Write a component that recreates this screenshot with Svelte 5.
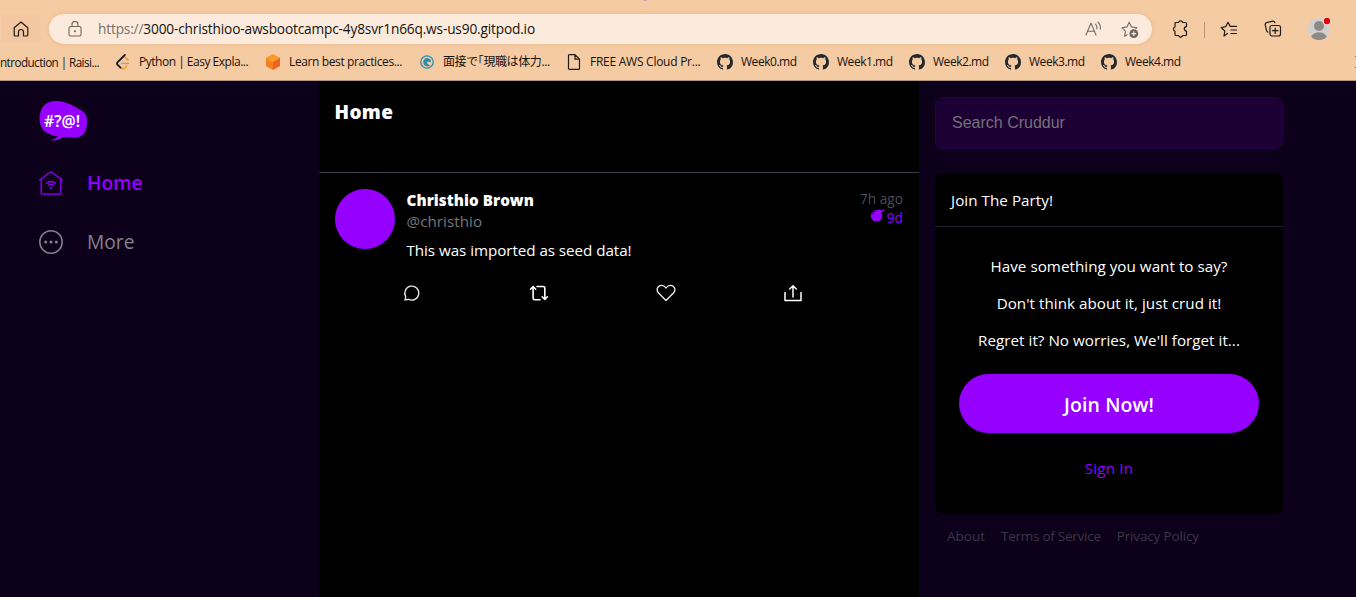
<script>
  const bookmarks = [
    { icon: 'leet', text: 'Python | Easy Expla...', ls: -0.49 },
    { icon: 'cube', text: 'Learn best practices...', ls: -0.38 },
    { icon: 'ring', text: '面接で｢現職は体力...', ls: -0.4 },
    { icon: 'file', text: 'FREE AWS Cloud Pr...', ls: -0.26 },
    ...[0, 1, 2, 3, 4].map((n) => ({ icon: 'github', text: `Week${n}.md`, ls: -0.46 }))
  ];
</script>

<div class="page">
  <header class="chrome">
    <span class="speck"></span>
    <div class="toolbar">
      <div class="homebtn">
        <svg width="16" height="16" viewBox="0 0 16 16" fill="none" stroke="#1f1a16" stroke-width="1.2" stroke-linejoin="round"><path d="M1.2 6.8 8 1l6.800 5.800V14a1 1 0 0 1-1 1h-3.300v-4a2.500 2.500 0 0 0-5 0v4H2.200a1 1 0 0 1-1-1z" /></svg>
      </div>
      <div class="address">
        <svg class="lock" width="14" height="16" viewBox="0 0 14 16" fill="none" stroke="#6e665f" stroke-width="1.1"><rect x="1" y="5.500" width="12" height="9.500" rx="1.500" /><path d="M4 5.500V3.500a3 3 0 0 1 6 0v2" /><circle cx="7" cy="10.200" r=".7" fill="#6e665f" stroke="none" /><circle cx="7" cy="10.200" r=".4" /></svg>
        <span class="url"><i>https://</i>3000-christhioo-awsbootcampc-4y8svr1n66q.ws-us90.gitpod.io</span>
        <svg class="read" width="17" height="16" viewBox="0 0 17 16" fill="none" stroke="#716a64" stroke-width="1.1" stroke-linecap="round"><path d="M1 14 5.800 2.500h.4L11 14M2.700 10.200h6.600M10.500 3.200q1.800 1.800 1.400 4.600M13 1.200q3 3 2.300 7" /></svg>
        <svg class="fav" width="18" height="18" viewBox="0 0 18 18" fill="none" stroke="#716a64" stroke-width="1.1" stroke-linejoin="round"><path d="M6.500 13.500 3.600 15.200l.8-5L1 6.700l4.900-.8L8.200 1.300l2.300 4.600 5.300.8-1.200 1.200" /><circle cx="12.800" cy="12.700" r="4.400" fill="#6b6560" stroke="none" /><path d="M12.800 10.300v4.800M10.400 12.700h4.800" stroke="#fcebdc" stroke-width="1.200" /></svg>
      </div>
      <div class="tools">
        <svg width="16" height="18" viewBox="0 0 16 18" fill="none" stroke="#1f1a16" stroke-width="1.200" stroke-linejoin="round"><path d="M3 3.500a1 1 0 0 1 1-1h2.500a2.200 2.200 0 0 1 4.200 0H13.500a1 1 0 0 1 1 1V6.600a2 2 0 0 0 0 4.400v3.500a1 1 0 0 1-1 1H10.700a2.200 2.200 0 0 1-4.200 0H4a1 1 0 0 1-1-1V11.200a2.200 2.200 0 0 1 0-4.200z" /></svg>
        <span class="divider"></span>
        <svg width="18" height="16" viewBox="0 0 18 16" fill="none" stroke="#1f1a16" stroke-width="1.200" stroke-linejoin="round" stroke-linecap="round"><path d="M7.500 12.500 4 15l.8-5L1.200 6.500l4.500-.8L8 1.200l2.200 4.200H16.500M11 9h5.500M11 12.500h5.500" /></svg>
        <svg class="collect" width="18" height="18" viewBox="0 0 18 18" fill="none" stroke="#1f1a16" stroke-width="1.200" stroke-linecap="round"><path d="M4 12.200a2 2 0 0 1-1.500-1.500L1.200 5a2 2 0 0 1 1.500-2.300L8.500 1.200a2 2 0 0 1 2.400 1.500" /><rect x="6" y="5.500" width="10.500" height="10.500" rx="2" /><path d="M11.200 8v5.500M8.500 10.700H14" /></svg>
        <svg class="profile" width="24" height="24" viewBox="0 0 24 24"><defs><clipPath id="disc"><circle cx="11" cy="13" r="11" /></clipPath></defs><circle cx="11" cy="13" r="11" fill="#d2d0ce" /><g clip-path="url(#disc)" fill="#8c8986"><circle cx="11" cy="10" r="5" /><ellipse cx="11" cy="22" rx="8" ry="5.800" /></g><circle cx="19" cy="5" r="4" fill="#fbe4d0" /><circle cx="19" cy="5" r="3.200" fill="#e3000f" /></svg>
      </div>
    </div>
    <nav class="bookmarks">
      <div class="bm first"><span>ntroduction | Raisi...</span></div>
      {#each bookmarks as b}
        <div class="bm">
          {#if b.icon === 'leet'}
            <svg width="16" height="16" viewBox="0 0 16 16" fill="none" stroke-width="1.800" stroke-linecap="round"><path d="M10.500 3.800 13 6M11.500 12.200 9.800 14.200q-1.500 1.200-3.200 0" stroke="#f7a01d" /><path d="M9.800 1 2.500 8.300q-1 1.200 0 2.400l3 3" stroke="#171717" /><path d="M6.500 9.500h7" stroke="#aaa59f" stroke-width="1.500" /></svg>
          {:else if b.icon === 'cube'}
            <svg width="16" height="16" viewBox="0 0 16 16"><path d="m8 0 7 3.800L8 8 1 3.800z" fill="#fb9a2a" /><path d="M1 3.800 8 8v8l-7-4z" fill="#f57f20" /><path d="M15 3.800 8 8v8l7-4z" fill="#ec6420" /></svg>
          {:else if b.icon === 'ring'}
            <svg width="16" height="16" viewBox="0 0 16 16"><circle cx="8" cy="8" r="6.200" fill="none" stroke="#2e8ca8" stroke-width="1.300" /><path d="M8.500 3.800A4.300 4.300 0 1 0 11.500 11.200L9.500 10.800 8 9l.5-1.600L11.800 8.200 12 6z" fill="#2e8ca8" /></svg>
          {:else if b.icon === 'file'}
            <svg width="16" height="16" viewBox="0 0 16 16" fill="none" stroke="#1f1a16" stroke-width="1.200" stroke-linejoin="round"><path d="M3.500.6H9l4.500 4.600V14.400a1 1 0 0 1-1 1h-9a1 1 0 0 1-1-1V1.600a1 1 0 0 1 1-1zM9 .6v4.600h4.500" /></svg>
          {:else}
            <svg width="16" height="16" viewBox="0 0 16 16" fill="#24292f"><path d="M8 0C3.580 0 0 3.580 0 8c0 3.540 2.290 6.530 5.470 7.590.4.070.55-.17.55-.38 0-.19-.01-.82-.01-1.490-2.010.37-2.530-.49-2.690-.94-.09-.23-.48-.94-.82-1.130-.28-.15-.68-.52-.01-.53.63-.01 1.080.58 1.230.82.72 1.210 1.870.87 2.330.66.07-.52.28-.87.51-1.070-1.780-.2-3.640-.89-3.640-3.950 0-.87.31-1.590.82-2.150-.08-.2-.36-1.020.08-2.120 0 0 .67-.21 2.200.82.64-.18 1.320-.27 2-.27s1.360.09 2 .27c1.530-1.040 2.200-.82 2.200-.82.44 1.100.16 1.920.08 2.120.51.56.82 1.270.82 2.150 0 3.070-1.870 3.750-3.650 3.950.29.25.54.73.54 1.480 0 1.070-.01 1.930-.01 2.200 0 .21.15.46.55.38A8.010 8.010 0 0 0 16 8c0-4.420-3.580-8-8-8z" /></svg>
          {/if}
          <span style:letter-spacing="{b.ls}px">{b.text}</span>
        </div>
      {/each}
      <svg class="more-edge" width="1" height="12" viewBox="0 0 1 12"><path d="M0 0h1v1H0zM0 11h1v1H0z" fill="#7b6551" /></svg>
    </nav>
  </header>

  <div class="app">
    <aside class="left">
      <svg class="logo" width="48" height="40" viewBox="0 0 48 40"><path d="M.5 18C.5 6 7 0 17 0c12 0 21 7 27 10.500 3 2 4 5 4 9.500 0 10-3 16-11 16.500-5 0-9-.5-13-.5-4 3-8 4-13 3 4-.5 6-1.500 8-3.500C8 33.500.5 29 .5 18z" fill="#9500ff" /><text x="5" y="25.500" fill="#fff" textLength="36" lengthAdjust="spacingAndGlyphs">#?@!</text></svg>
      <a class="nav active" href="#home">
        <svg width="24" height="24" viewBox="0 0 24 24" fill="none" stroke="#9500ff" stroke-width="1.300" stroke-linecap="round" stroke-linejoin="round"><path d="M.7 9 12 .8 23.300 9M2.200 8v14.200a1 1 0 0 0 1 1h17.600a1 1 0 0 0 1-1V8" /><path d="M7.500 12.300q4.500-3.600 9 0M9.300 14.500q2.700-2.100 5.400 0" /><circle cx="12" cy="17" r=".8" fill="#9500ff" stroke-width=".6" /></svg>
        <span>Home</span>
      </a>
      <a class="nav" href="#more">
        <svg width="24" height="24" viewBox="0 0 24 24" fill="#85808a"><circle cx="12" cy="12" r="11.200" fill="none" stroke="#85808a" stroke-width="1.500" /><circle cx="6.700" cy="12" r="1.500" /><circle cx="12" cy="12" r="1.500" /><circle cx="17.300" cy="12" r="1.500" /></svg>
        <span>More</span>
      </a>
    </aside>

    <main>
      <div class="title"><span>Home</span></div>
      <article>
        <div class="head">
          <div class="avatar"></div>
          <div class="who">
            <div class="name">Christhio Brown</div>
            <div class="handle">@christhio</div>
            <div class="msg">This was imported as seed data!</div>
          </div>
          <div class="times">
            <div class="ago">7h ago</div>
            <div class="exp">
              <svg width="15" height="13" viewBox="0 0 15 13"><path d="M5.800 1.300 8 1l1-.8 1.500 1L14.500.5l-.3 1.200-3 .9.500 2A5.700 5.700 0 1 1 5.800 1.300z" fill="#9500ff" /><path d="M2.200 5q.8-2.300 3-2.800" fill="none" stroke="#000" stroke-width=".9" /></svg>
              <span>9d</span>
            </div>
          </div>
        </div>
        <div class="actions">
          <svg width="20" height="20" viewBox="0 0 20 20" fill="none" stroke="#e8e8e8" stroke-width="1.300"><path d="M3.100 16.900 3.700 13.600A7 7 0 1 1 6.500 16.300z" /></svg>
          <svg width="20" height="20" viewBox="0 0 20 20" fill="none" stroke="#fff" stroke-width="1.600" stroke-linecap="round" stroke-linejoin="round"><path d="M1.500 6.200 4.100 3.500l2.600 2.700M4.100 4v11.200a1.500 1.500 0 0 0 1.500 1.500h5.400M8 3.500h6.300a1.500 1.500 0 0 1 1.500 1.500v11.200M13.200 13.800l2.600 2.700 2.600-2.700" /></svg>
          <svg width="20" height="20" viewBox="0 0 20 20" fill="none" stroke="#f2f2f2" stroke-width="1.300" stroke-linejoin="round"><path d="M10 17.500 2.800 10.300C-.8 6.500 2 2.400 5.500 2.400c2.200 0 3.700 1.400 4.500 2.600.8-1.200 2.300-2.600 4.500-2.600 3.500 0 6.300 4.100 2.700 7.900z" /></svg>
          <svg width="20" height="20" viewBox="0 0 20 20" fill="none" stroke="#fff" stroke-width="1.500" stroke-linecap="round" stroke-linejoin="round"><path d="M2 9.500V17.500H18V9.500M10 14V3M6.700 6 10 2.700 13.300 6" /></svg>
        </div>
      </article>
    </main>

    <aside class="right">
      <input type="text" placeholder="Search Cruddur" />
      <section class="join">
        <div class="join-head">Join The Party!</div>
        <div class="join-body">
          <p>Have something you want to say?</p>
          <p>Don't think about it, just crud it!</p>
          <p>Regret it? No worries, We'll forget it...</p>
          <a class="cta" href="#join"><span>Join Now!</span></a>
          <a class="signin" href="#signin">Sign In</a>
        </div>
      </section>
      <footer><a href="#about">About</a><a class="tight" href="#terms">Terms of Service</a><a class="policy" href="#privacy">Privacy Policy</a></footer>
    </aside>
  </div>
</div>

<style>
  :global(body) { margin: 0; background: #0d001a; overflow: hidden; }
  .page { width: 1356px; height: 597px; display: flex; flex-direction: column; overflow: hidden; font-family: "Open Sans", "Noto Sans", "Noto Sans CJK JP", sans-serif; }
  .page * { box-sizing: border-box; }
  svg { display: block; flex: none; }
  a { text-decoration: none; color: inherit; }
  span, .name, .handle, .msg { white-space: nowrap; }

  .chrome { position: relative; height: 81px; flex: none; background: #f5cba3; border-bottom: 1px solid #b39577; }
  .speck { position: absolute; left: 643px; top: 0; width: 4px; height: 1px; background: #dda2b8; }
  .toolbar { height: 44px; padding-top: 14px; display: flex; }
  .homebtn { width: 40px; height: 28px; margin: 1px 8px 0 1px; display: flex; align-items: center; justify-content: center; background: #f2c7a1; }
  .address { width: 1103px; height: 30px; border-radius: 15px; background: #fcebdc; box-shadow: 0 0 4px #e8b88c; display: flex; align-items: center; padding: 0 13px 0 19px; }
  .url { margin-left: 16px; font-size: 13.700px; letter-spacing: -0.170px; line-height: 18px; padding-bottom: 1px; color: #17120e; flex: 1; }
  .url i { font-style: normal; color: #77706a; }
  .fav { margin-left: 19px; margin-top: 2px; }
  .tools { display: flex; align-items: center; height: 30px; padding-left: 20px; }
  .divider { width: 1px; height: 16px; background: #b6977a; margin: 2px 15px 0 16px; }
  .collect { margin-left: 26px; }
  .profile { margin-left: 26px; margin-top: -2px; }
  .bookmarks { height: 36px; display: grid; grid-template-columns: 115px 150px 154px 147px 151px repeat(5, 96px) 1fr; align-items: center; font-size: 12px; color: #17120e; }
  .bm { display: flex; align-items: center; gap: 8px; min-width: 0; }
  .bm.first { letter-spacing: -0.560px; font-size: 11.700px; }
  .bm.first, .bm span { line-height: 16px; }
  .more-edge { justify-self: end; }

  .app { flex: 1; display: grid; grid-template-columns: 319px 600px 1fr; background: #0d001a; }
  .left { padding: 20px 0 0 39px; }
  .logo { margin-bottom: 30px; }
  .logo text { font: 600 16px "Noto Sans", sans-serif; }
  .nav { display: flex; align-items: center; height: 24px; gap: 24px; font-size: 19.200px; color: #85808a; margin-bottom: 35px; }
  .nav span { line-height: 24px; }
  .nav.active { color: #9500ff; font-weight: 600; }

  main { background: #000; }
  .title { height: 92px; border-bottom: 1px solid #3c3c4b; padding: 17px 15.500px 0; color: #fff; font-size: 19px; letter-spacing: 0.350px; font-weight: 800; line-height: 28px; }
  article { padding: 16px 16px 0; }
  .head { display: flex; height: 87px; }
  .avatar { width: 60px; height: 60px; border-radius: 50%; background: #9500ff; flex: none; }
  .who { flex: 1; padding-left: 11.500px; font-size: 15.200px; }
  .name { font-weight: 800; color: #fff; line-height: 22px; letter-spacing: 0.050px; }
  .handle { color: #77777c; line-height: 21px; letter-spacing: 0.050px; }
  .msg { color: #fff; line-height: 22px; margin-top: 7px; letter-spacing: -0.050px; }
  .times { text-align: right; font-size: 13.700px; color: #4b4d5a; }
  .ago { line-height: 20px; }
  .exp { display: flex; justify-content: flex-end; gap: 1px; color: #9500ff; line-height: 18px; }
  .exp svg { margin-right: 1px; }
  .actions { display: flex; gap: 107px; padding: 7px 0 0 67px; }

  .right { padding: 16px 73px 0 16px; }
  input { display: block; width: 100%; height: 52px; border: 1px solid #270049; border-radius: 8px; background: #1d0033; padding: 0 16px; font: 16px "Liberation Sans", Arial, sans-serif; outline: none; }
  input::placeholder { color: #757078; opacity: 1; }
  .join { height: 341px; margin-top: 24px; border-radius: 8px; background: #000; color: #fff; font-size: 15.200px; }
  .join-head { height: 54px; border-bottom: 1px solid #25222d; padding: 0 16px; line-height: 55px; letter-spacing: 0.050px; }
  .join-body { display: flex; flex-direction: column; align-items: center; padding: 28px 24px 0; }
  p { margin: 0 0 15px; line-height: 22px; white-space: nowrap; letter-spacing: 0.030px; }
  .cta { width: 300px; height: 59px; border-radius: 30px; background: #9500ff; display: flex; align-items: center; justify-content: center; font-size: 19.500px; letter-spacing: 0.100px; font-weight: 600; margin-top: 8px; padding-top: 1px; }
  .signin { color: #9500ff; margin-top: 24px; line-height: 22px; letter-spacing: 0.200px; }
  footer { display: flex; gap: 16px; padding: 12px 12px; font-size: 13.500px; line-height: 20px; color: #3d3548; white-space: nowrap; }
  .tight { letter-spacing: -0.260px; }
  .policy { letter-spacing: -0.150px; }
</style>
